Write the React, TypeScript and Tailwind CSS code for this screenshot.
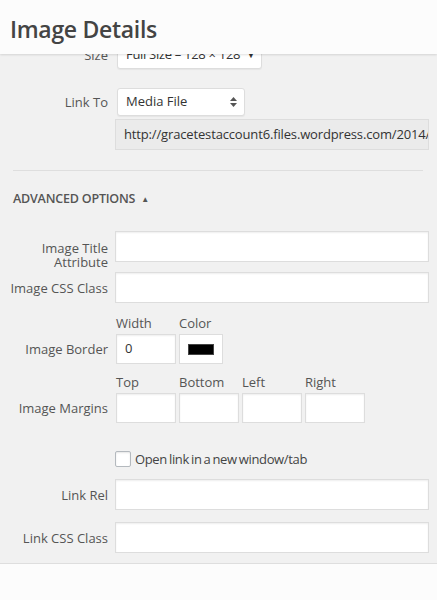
import React from "react";

const font = { fontFamily: '"Open Sans", "Liberation Sans", sans-serif' };

function Label({ children, className = "" }: { children: React.ReactNode; className?: string }) {
  return (
    <div className={`w-[108px] shrink-0 text-right text-[13px] leading-[14px] text-[#555] ${className}`}>
      {children}
    </div>
  );
}

function TextInput({ className = "" }: { className?: string }) {
  return (
    <div
      className={`h-[31px] border border-[#ddd] bg-white shadow-[inset_0_1px_2px_rgba(0,0,0,0.07)] ${className}`}
    />
  );
}

function SmallBox({ children }: { children?: React.ReactNode }) {
  return (
    <div className="flex h-[30px] w-[60px] items-center border border-[#ddd] bg-white pl-[8px] text-[13px] text-[#333] shadow-[inset_0_1px_2px_rgba(0,0,0,0.07)]">
      {children}
    </div>
  );
}

export default function App() {
  return (
    <div className="relative h-[600px] w-[437px] overflow-hidden bg-[#f1f1f1]" style={font}>
      {/* Header overlay */}
      <div className="absolute left-0 top-0 z-10 flex h-[54px] w-full items-center bg-[#fcfcfc] pl-[10px] pt-[5px] shadow-[0_1px_2px_rgba(0,0,0,0.12)]">
        <h1 className="text-[23px] font-semibold leading-none tracking-[-0.3px] text-[#444]">Image Details</h1>
      </div>

      <div className="flex flex-col pt-[41px] pr-[8px]">
        {/* Size row (partly hidden) */}
        <div className="flex items-center gap-[9px]">
          <Label>Size</Label>
          <div className="flex h-[28px] w-[145px] items-center justify-between whitespace-nowrap rounded-[3px] border border-[#ddd] bg-white pl-[8px] pr-[6px] text-[13px] tracking-[-0.3px] text-[#333] shadow-[0_1px_1px_rgba(0,0,0,0.05)]">
            <span>Full Size – 128 × 128</span>
            <span className="text-[9px] text-[#333]">▼</span>
          </div>
        </div>

        {/* Link To */}
        <div className="mt-[19px] flex items-center gap-[9px]">
          <Label>Link To</Label>
          <div className="flex h-[28px] w-[128px] items-center justify-between rounded-[3px] border border-[#ddd] bg-white pl-[8px] pr-[7px] text-[13px] text-[#333] shadow-[0_1px_1px_rgba(0,0,0,0.05)]">
            <span>Media File</span>
            <svg width="7" height="10" viewBox="0 0 7 10">
              <path d="M3.5 0 L7 4 L0 4 Z" fill="#555" />
              <path d="M3.5 10 L7 6 L0 6 Z" fill="#555" />
            </svg>
          </div>
        </div>

        {/* URL */}
        <div className="mt-[3px] flex">
          <div className="w-[115px] shrink-0" />
          <div className="flex h-[31px] min-w-0 flex-1 items-center overflow-hidden whitespace-nowrap border border-[#ddd] bg-[#ebebeb] pl-[8px] text-[13px] tracking-[-0.15px] text-[#333]">
            http://gracetestaccount6.files.wordpress.com/2014/05/image.png
          </div>
        </div>

        {/* Divider */}
        <div className="ml-[13px] mr-[6px] mt-[20px] h-px bg-[#dedede]" />

        {/* Advanced options */}
        <div className="ml-[13px] mt-[20px] flex items-center gap-[6px] text-[12.5px] font-semibold uppercase leading-[16px] tracking-[-0.2px] text-[#555]">
          <span>Advanced Options</span>
          <span className="text-[8px] text-[#555]">▲</span>
        </div>

        {/* Image Title Attribute */}
        <div className="mt-[24px] flex h-[31px] items-start gap-[7px]">
          <Label className="pt-[10px]">
            Image Title
            <br />
            Attribute
          </Label>
          <TextInput className="flex-1" />
        </div>

        {/* Image CSS Class */}
        <div className="mt-[10px] flex items-center gap-[7px]">
          <Label>Image CSS Class</Label>
          <TextInput className="flex-1" />
        </div>

        {/* Image Border */}
        <div className="ml-[116px] mt-[11px] flex gap-[3px] text-[13px] leading-[18px] text-[#555]">
          <span className="w-[60px]">Width</span>
          <span>Color</span>
        </div>
        <div className="mt-[2px] flex items-center gap-[8px]">
          <Label>Image Border</Label>
          <div className="flex gap-[3px]">
            <SmallBox>0</SmallBox>
            <div className="flex h-[30px] w-[44px] items-center justify-center border border-[#ddd] bg-white">
              <div className="h-[11px] w-[26px] border border-[#444] bg-black" />
            </div>
          </div>
        </div>

        {/* Image Margins */}
        <div className="ml-[116px] mt-[9px] flex gap-[3px] text-[13px] leading-[18px] text-[#555]">
          <span className="w-[60px]">Top</span>
          <span className="w-[60px]">Bottom</span>
          <span className="w-[60px]">Left</span>
          <span className="w-[60px]">Right</span>
        </div>
        <div className="mt-[2px] flex items-center gap-[8px]">
          <Label>Image Margins</Label>
          <div className="flex gap-[3px]">
            <SmallBox />
            <SmallBox />
            <SmallBox />
            <SmallBox />
          </div>
        </div>

        {/* Checkbox */}
        <div className="mt-[28px] flex items-center">
          <div className="w-[115px] shrink-0" />
          <div className="h-[16px] w-[16px] rounded-[2px] border border-[#b4b9be] bg-white shadow-[inset_0_1px_2px_rgba(0,0,0,0.1)]" />
          <span className="ml-[4px] text-[13px] leading-[16px] tracking-[-0.35px] text-[#444] [word-spacing:-1px]">
            Open link in a new window/tab
          </span>
        </div>

        {/* Link Rel */}
        <div className="mt-[12px] flex items-center gap-[7px]">
          <Label>Link Rel</Label>
          <TextInput className="flex-1" />
        </div>

        {/* Link CSS Class */}
        <div className="mt-[12px] flex items-center gap-[7px]">
          <Label>Link CSS Class</Label>
          <TextInput className="flex-1" />
        </div>
      </div>

      {/* Footer */}
      <div className="absolute bottom-0 left-0 h-[37px] w-full border-t border-[#dedede] bg-[#fcfcfc]" />
    </div>
  );
}
